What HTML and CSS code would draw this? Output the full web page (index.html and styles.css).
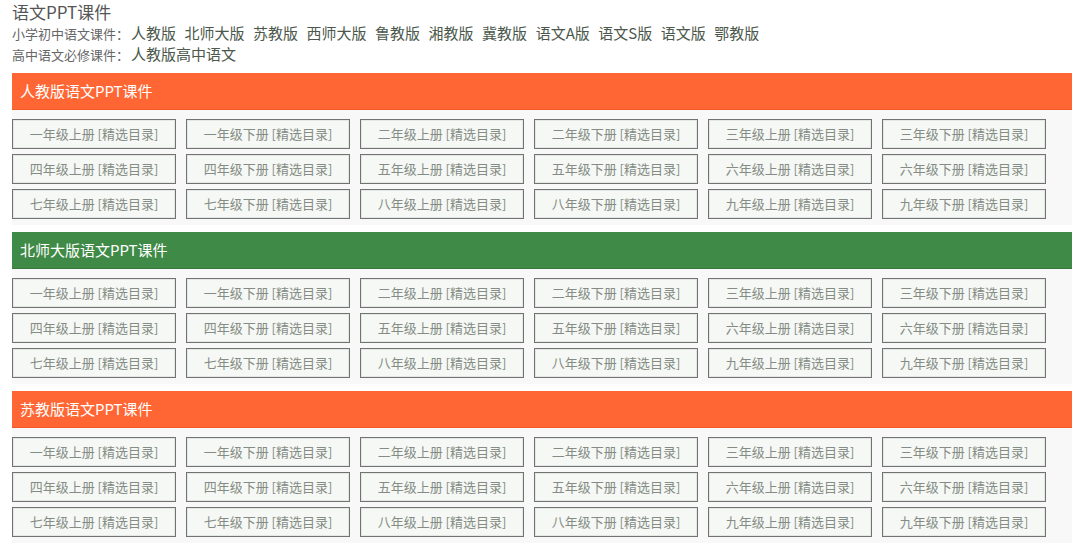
FILE: index.html
```html
<!DOCTYPE html>
<html lang="zh-CN">
<head>
<meta charset="utf-8">
<title>语文PPT课件</title>
<link rel="stylesheet" href="styles.css">
</head>
<body>
<div class="page">
  <div class="title">语文PPT课件</div>
  <div class="nav-line"><span class="label">小学初中语文课件：</span><a class="link">人教版</a><a class="link">北师大版</a><a class="link">苏教版</a><a class="link">西师大版</a><a class="link">鲁教版</a><a class="link">湘教版</a><a class="link">冀教版</a><a class="link">语文A版</a><a class="link">语文S版</a><a class="link">语文版</a><a class="link">鄂教版</a></div>
  <div class="nav-line"><span class="label">高中语文必修课件：</span><a class="link">人教版高中语文</a></div>

  <section class="section">
    <div class="bar orange">人教版语文PPT课件</div>
    <div class="grid">
      <a class="btn">一年级上册 [精选目录]</a><a class="btn">一年级下册 [精选目录]</a><a class="btn">二年级上册 [精选目录]</a><a class="btn">二年级下册 [精选目录]</a><a class="btn">三年级上册 [精选目录]</a><a class="btn">三年级下册 [精选目录]</a>
      <a class="btn">四年级上册 [精选目录]</a><a class="btn">四年级下册 [精选目录]</a><a class="btn">五年级上册 [精选目录]</a><a class="btn">五年级下册 [精选目录]</a><a class="btn">六年级上册 [精选目录]</a><a class="btn">六年级下册 [精选目录]</a>
      <a class="btn">七年级上册 [精选目录]</a><a class="btn">七年级下册 [精选目录]</a><a class="btn">八年级上册 [精选目录]</a><a class="btn">八年级下册 [精选目录]</a><a class="btn">九年级上册 [精选目录]</a><a class="btn">九年级下册 [精选目录]</a>
    </div>
  </section>

  <section class="section">
    <div class="bar green">北师大版语文PPT课件</div>
    <div class="grid">
      <a class="btn">一年级上册 [精选目录]</a><a class="btn">一年级下册 [精选目录]</a><a class="btn">二年级上册 [精选目录]</a><a class="btn">二年级下册 [精选目录]</a><a class="btn">三年级上册 [精选目录]</a><a class="btn">三年级下册 [精选目录]</a>
      <a class="btn">四年级上册 [精选目录]</a><a class="btn">四年级下册 [精选目录]</a><a class="btn">五年级上册 [精选目录]</a><a class="btn">五年级下册 [精选目录]</a><a class="btn">六年级上册 [精选目录]</a><a class="btn">六年级下册 [精选目录]</a>
      <a class="btn">七年级上册 [精选目录]</a><a class="btn">七年级下册 [精选目录]</a><a class="btn">八年级上册 [精选目录]</a><a class="btn">八年级下册 [精选目录]</a><a class="btn">九年级上册 [精选目录]</a><a class="btn">九年级下册 [精选目录]</a>
    </div>
  </section>

  <section class="section">
    <div class="bar orange">苏教版语文PPT课件</div>
    <div class="grid">
      <a class="btn">一年级上册 [精选目录]</a><a class="btn">一年级下册 [精选目录]</a><a class="btn">二年级上册 [精选目录]</a><a class="btn">二年级下册 [精选目录]</a><a class="btn">三年级上册 [精选目录]</a><a class="btn">三年级下册 [精选目录]</a>
      <a class="btn">四年级上册 [精选目录]</a><a class="btn">四年级下册 [精选目录]</a><a class="btn">五年级上册 [精选目录]</a><a class="btn">五年级下册 [精选目录]</a><a class="btn">六年级上册 [精选目录]</a><a class="btn">六年级下册 [精选目录]</a>
      <a class="btn">七年级上册 [精选目录]</a><a class="btn">七年级下册 [精选目录]</a><a class="btn">八年级上册 [精选目录]</a><a class="btn">八年级下册 [精选目录]</a><a class="btn">九年级上册 [精选目录]</a><a class="btn">九年级下册 [精选目录]</a>
    </div>
  </section>
</div>
</body>
</html>
```

FILE: styles.css
```css
html, body {
  margin: 0;
  padding: 0;
  background: #ffffff;
}
body {
  font-family: "Noto Sans CJK SC", "Noto Sans", "Liberation Sans", sans-serif;
}
.page {
  width: 1060px;
  padding: 1px 8px 0 12px;
}
.title {
  font-size: 17px;
  line-height: 22px;
  color: #555555;
}
.nav-line {
  line-height: 18px;
  white-space: nowrap;
}
.nav-line + .nav-line {
  margin-top: 1px;
}
.label {
  font-size: 13px;
  color: #666666;
  margin-right: 2px;
}
.link {
  font-size: 15px;
  color: #4b584b;
  margin-right: 8.5px;
}
.section {
  margin-top: 9px;
}
.section + .section {
  margin-top: 7px;
}
.bar {
  height: 37px;
  line-height: 36px;
  padding-left: 8px;
  color: #ffffff;
  font-size: 15px;
  box-sizing: border-box;
}
.orange {
  background: #ff6633;
  border-bottom: 1px solid #f05a2a;
}
.green {
  background: #3f8a46;
  border-bottom: 1px solid #357a3c;
}
.grid {
  display: grid;
  grid-template-columns: repeat(6, 164px);
  column-gap: 10px;
  row-gap: 5px;
  padding: 9px 0 6px 0;
  background: #f7f8f7;
}
.btn {
  display: block;
  box-sizing: border-box;
  height: 30px;
  line-height: 28px;
  border: 1px solid #727272;
  background: #f5f8f4;
  color: #858c85;
  font-size: 13px;
  text-align: center;
  box-shadow: inset 0 0 0 1px #e4e8e4;
}
```
